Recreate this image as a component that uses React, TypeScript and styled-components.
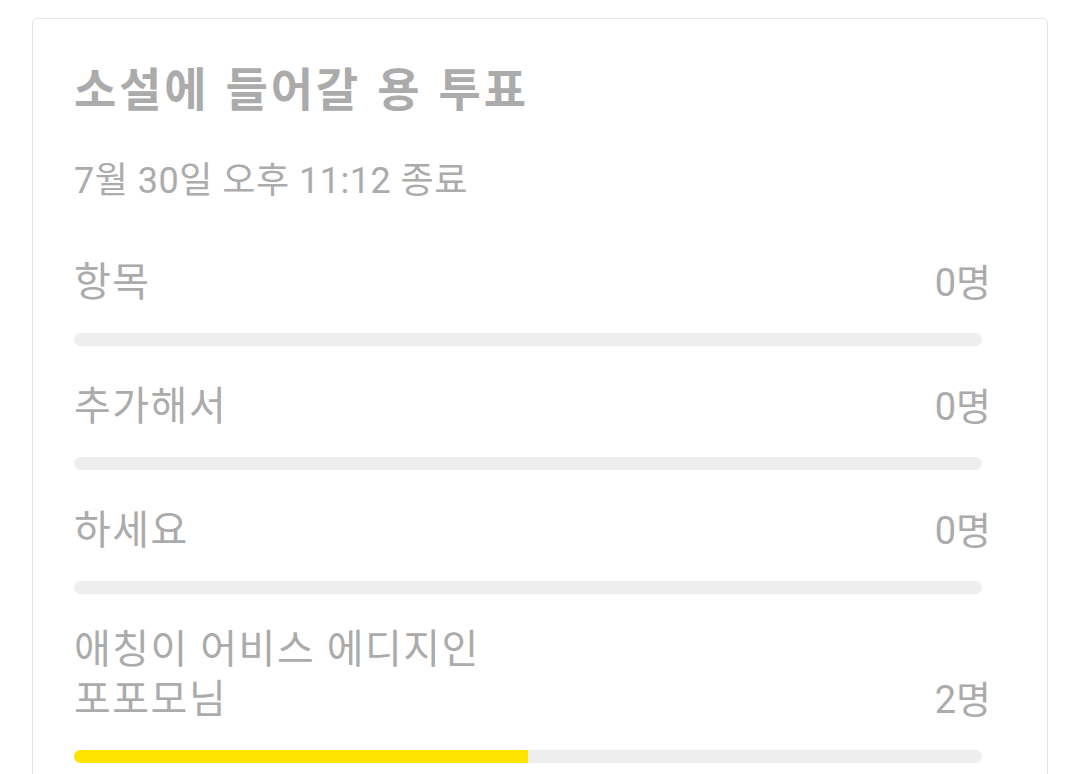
import React from 'react'
import styled, { createGlobalStyle } from 'styled-components'

const GlobalStyle = createGlobalStyle`
  html, body {
    margin: 0;
    padding: 0;
    background: #ffffff;
  }
  body {
    font-family: Roboto, 'Noto Sans CJK KR', sans-serif;
    overflow: hidden;
  }
`

const Page = styled.div`
  height: 774px;
  padding: 18px 0 0 32px;
  box-sizing: border-box;
  overflow: hidden;
`

const Card = styled.div`
  width: 1016px;
  box-sizing: border-box;
  border: 1px solid #e4e4e4;
  border-radius: 5px;
  color: #ababab;
  background: #ffffff;
`

const Header = styled.div`
  padding: 41px 56px 0 41px;
  height: 224px;
  box-sizing: border-box;
`

const Title = styled.h1`
  margin: 0;
  font-size: 46px;
  line-height: 60px;
  font-weight: 700;
  letter-spacing: 2.8px;
  word-spacing: 2px;
`

const Deadline = styled.div`
  margin-top: 39px;
  font-size: 36px;
  line-height: 44px;
  letter-spacing: 0.5px;
`

const Body = styled.div`
  padding: 10px 56px 0 41px;
`

const Item = styled.div`
  padding-bottom: 31px;
`

const Row = styled.div`
  display: flex;
  justify-content: space-between;
  align-items: flex-end;
  min-height: 55px;
`

const Label = styled.div`
  font-size: 40px;
  line-height: 50px;
  letter-spacing: 1.5px;
  white-space: pre-line;
`

const Count = styled.div`
  font-size: 38px;
  line-height: 50px;
`

const Track = styled.div`
  margin: 25px 9px 0 0;
  height: 13px;
  border-radius: 7px;
  background: #eeeeee;
  overflow: hidden;
`

const Fill = styled.div`
  height: 100%;
  background: #ffe400;
`

const options = [
  { label: '항목', votes: 0 },
  { label: '추가해서', votes: 0 },
  { label: '하세요', votes: 0 },
  { label: '애칭이 어비스 에디지인\n포포모님', votes: 2 },
]

export default function App() {
  const total = 4
  return (
    <>
      <GlobalStyle />
      <Page>
        <Card>
          <Header>
            <Title>소설에 들어갈 용 투표</Title>
            <Deadline>7월 30일 오후 11:12 종료</Deadline>
          </Header>
          <Body>
            {options.map((o) => (
              <Item key={o.label}>
                <Row>
                  <Label>{o.label}</Label>
                  <Count>{o.votes}명</Count>
                </Row>
                <Track>
                  <Fill style={{ width: `${(o.votes / total) * 100}%` }} />
                </Track>
              </Item>
            ))}
          </Body>
        </Card>
      </Page>
    </>
  )
}
